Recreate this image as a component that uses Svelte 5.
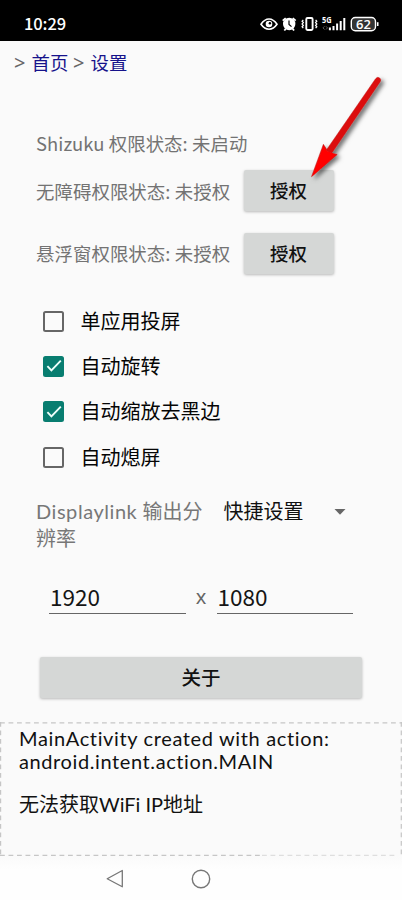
<script>
  let permissions = $state([
    { label: '无障碍权限状态: 未授权' },
    { label: '悬浮窗权限状态: 未授权' }
  ]);
  let options = $state([
    { label: '单应用投屏', checked: false },
    { label: '自动旋转', checked: true },
    { label: '自动缩放去黑边', checked: true },
    { label: '自动熄屏', checked: false }
  ]);
  let width = $state('1920');
  let height = $state('1080');
</script>

<div class="screen">
  <header>
    <span class="time">10:29</span>
    <svg class="status" width="122" height="20" viewBox="0 0 122 20" fill="none" stroke="#fff">
      <path d="M1 10.200C4 5.800 6.500 5 9 5s5 .8 8 5.200c-3 4.300-5.500 5-8 5s-5-.7-8-5Z" stroke-width="1.600" />
      <circle cx="9" cy="10" r="3.300" fill="#fff" stroke="none" />
      <circle cx="9.900" cy="9.200" r="1.200" fill="#000" stroke="none" />
      <circle cx="29.200" cy="10" r="6.200" fill="#fff" stroke="none" />
      <path d="m22.700 6.600 3-2.500m10 2.500-3-2.500M25.800 14.800l-1.500 1.700m8.300-1.700 1.500 1.700" stroke-width="1.800" />
      <path d="M29 6.400v4l2.500 2.200" stroke="#000" stroke-width="1.200" />
      <rect x="46.300" y="4" width="6.300" height="12" rx="1.200" stroke-width="1.900" />
      <path d="m43.300 5.800-1.200 1.400 1.200 1.400-1.200 1.400 1.200 1.400-1.200 1.400 1.200 1.400M55.600 5.800l1.200 1.400-1.200 1.400 1.200 1.400-1.200 1.400 1.200 1.400-1.200 1.400" stroke-width="1.300" />
      <path d="M69.900 13.500v2.700M73.500 12v4.200M77.100 9.500v6.700M80.700 6.900v9.300M84.300 4v12.200" stroke-width="2" />
      <path d="m64.500 12.300-1.500 1.600 1.500 1.600m1.500-3.200 1.500 1.600-1.500 1.600" stroke="#777" stroke-width=".8" />
      <rect x="91.300" y="3.500" width="24.200" height="13.200" rx="4" fill="#333" stroke-width="1.400" />
      <path d="M117.700 8.200v3.800" stroke-width="1.600" />
      <text class="net" x="62" y="9.200" textLength="9.600" lengthAdjust="spacingAndGlyphs">5G</text>
      <text class="bat" x="103.400" y="14.700" text-anchor="middle">62</text>
    </svg>
  </header>

  <nav><i>&gt;</i><a href="#home">首页</a><i>&gt;</i><a href="#settings">设置</a></nav>

  <main>
    <p class="shizuku"><span>Shizuku</span> 权限状态: 未启动</p>
    {#each permissions as item}
      <div class="permission"><p>{item.label}</p><button>授权</button></div>
    {/each}
    <div class="options">
      {#each options as item}
        <label>
          <input type="checkbox" bind:checked={item.checked} />
          <span class="box" class:on={item.checked}>
            {#if item.checked}<svg width="20" height="20" viewBox="0 0 20 20"><path d="m3.400 10.100 4 4.200 9.400-9.700" fill="none" stroke="#eefffb" stroke-width="1.900" /></svg>{/if}
          </span>
          <span>{item.label}</span>
        </label>
      {/each}
    </div>
    <div class="resolution">
      <p><span>Displaylink</span> 输出分<br />辨率</p>
      <div class="select">快捷设置<svg width="12" height="6" viewBox="0 0 12 6"><path d="M.5 0h11L6 5.800Z" fill="#666" /></svg></div>
    </div>
    <div class="size"><input bind:value={width} /><span>x</span><input bind:value={height} /></div>
    <button class="about">关于</button>
  </main>

  <section class="log">
    <svg class="frame" width="402" height="134" viewBox="0 0 402 134" fill="none" stroke="#c6c6c6" stroke-width="1.200" stroke-dasharray="4.800 3.700">
      <path d="M0 .8H402M.6 0V134M401.300 0V134M0 133.300H262" />
      <path d="M262 133.300H396" stroke="#dedede" />
    </svg>
    <p><span class="l1">MainActivity created with action:</span><br /><span class="l2">android.intent.action.MAIN</span></p>
    <p class="wifi">无法获取<span>WiFi IP</span>地址</p>
  </section>

  <footer>
    <svg width="18" height="20" viewBox="0 0 18 20"><path d="M16.300 1.500v16.300L1.200 9.700Z" fill="none" stroke="#777" stroke-width="1.300" stroke-linejoin="round" /></svg>
    <svg width="20" height="20" viewBox="0 0 20 20"><circle cx="10" cy="10" r="8.700" fill="none" stroke="#777" stroke-width="1.400" /></svg>
  </footer>

  <svg class="arrow" width="110" height="130" viewBox="0 0 110 130">
    <defs>
      <filter id="shade" x="-20%" y="-20%" width="150%" height="150%"><feDropShadow dx="3" dy="2.500" stdDeviation="2" flood-color="#000" flood-opacity=".55" /></filter>
    </defs>
    <g filter="url(#shade)">
      <path d="M75.400 9Q77.200 6.400 79.500 7.900 81.600 9.400 80.200 11.700L31.700 83.300 37.200 84.500 11.500 106.700 23.400 74.300 26.800 79.500Z" fill="#dc1010" stroke="#c51212" stroke-width=".5" />
      <path d="m23.600 75.500 3.200 5.500 9.400 3.800L12.300 106Z" fill="#ff0505" />
    </g>
  </svg>
</div>

<style>
  :global(body) { margin: 0; background: #fafafa; }
  .screen { position: relative; width: 402px; height: 900px; overflow: hidden; display: flex; flex-direction: column; background: #fafafa; color: #111; font: 20px/27px Lato, "Noto Sans CJK SC", sans-serif; font-variant-ligatures: none; }
  p { margin: 0; white-space: nowrap; }
  header { box-sizing: border-box; height: 41px; background: #000; color: #fff; display: flex; justify-content: space-between; align-items: center; padding: 6px 20.500px 0 24px; flex: none; }
  .time { font: 500 16.500px/24px "Noto Sans CJK SC", sans-serif; letter-spacing: -.1px; margin-top: -2px; }
  .status text { fill: #fff; stroke: none; font-family: "Open Sans", sans-serif; font-weight: 700; }
  .status .net { font-size: 8.500px; }
  .status .bat { font-size: 13px; font-weight: 600; }
  nav { height: 42px; flex: none; display: flex; align-items: center; padding-left: 14px; font: 18.400px/27px "Noto Sans CJK SC", sans-serif; }
  nav a { color: #16128b; text-decoration: none; width: 41.500px; }
  nav i { color: #666; font: 20px/27px "Noto Sans", sans-serif; width: 17.500px; }
  main { height: 639px; flex: none; padding: 45.500px 36px 0; box-sizing: border-box; display: flex; flex-direction: column; }
  .shizuku, .permission p { font-size: 18.400px; line-height: 28px; color: #737373; letter-spacing: .08px; }
  .shizuku, .permission { font-family: "Noto Sans CJK SC", sans-serif; }
  .shizuku { height: 31px; }
  .permission { height: 62.500px; flex: none; display: flex; align-items: center; }
  .permission p { width: 207.500px; }
  button { border: 0; border-radius: 2px; background: #d5d7d6; color: #111; padding: 0; font: 500 18.400px/27px "Noto Sans CJK SC", sans-serif; box-shadow: 0 1px 3px #0004; }
  .permission button { width: 90px; height: 41px; line-height: 39px; }
  .options { padding-top: 14px; }
  label { display: flex; align-items: center; height: 45.300px; padding-left: 7px; color: #050505; }
  label input { appearance: none; width: 0; height: 0; margin: 0; }
  .box { box-sizing: border-box; width: 21px; height: 21px; border: 2px solid #666; border-radius: 2.500px; margin-right: 16.500px; display: flex; align-items: center; justify-content: center; }
  .box.on { background: #087d70; border-color: #087d70; }
  .box svg { flex: none; }
  .resolution { display: flex; color: #777; padding-top: 18.500px; height: 54px; }
  .resolution p { width: 187.500px; }
  .resolution p span { letter-spacing: .55px; }
  .select { height: 27px; color: #111; display: flex; align-items: center; gap: 30px; }
  .size { display: flex; align-items: center; height: 34px; padding: 27.500px 0 0 13px; color: #666; }
  .size input { box-sizing: border-box; width: 136.500px; height: 34px; padding: 0 1px 1px; border: 0; border-bottom: 1px solid #666; outline: 0; border-radius: 0; background: none; color: #151515; font: 22.500px/31px "Noto Sans CJK SC", sans-serif; }
  .size span { width: 31px; text-align: center; font-family: "Noto Sans", sans-serif; }
  .about { width: 322px; height: 41px; margin: 43px 0 0 4px; font-size: 19.500px; line-height: 40px; flex: none; }
  .log { position: relative; box-sizing: border-box; height: 134px; flex: none; padding: 5px 19px; line-height: 23px; }
  .frame { position: absolute; inset: 0; }
  .l1 { letter-spacing: .64px; }
  .l2 { letter-spacing: .6px; }
  .wifi { margin-top: 20px; }
  footer { flex: 1; display: flex; align-items: center; padding: 1px 0 0 106px; gap: 67px; background: linear-gradient(#fafafa, #fefefe 30%); }
  .arrow { position: absolute; left: 300px; top: 70px; }
</style>
